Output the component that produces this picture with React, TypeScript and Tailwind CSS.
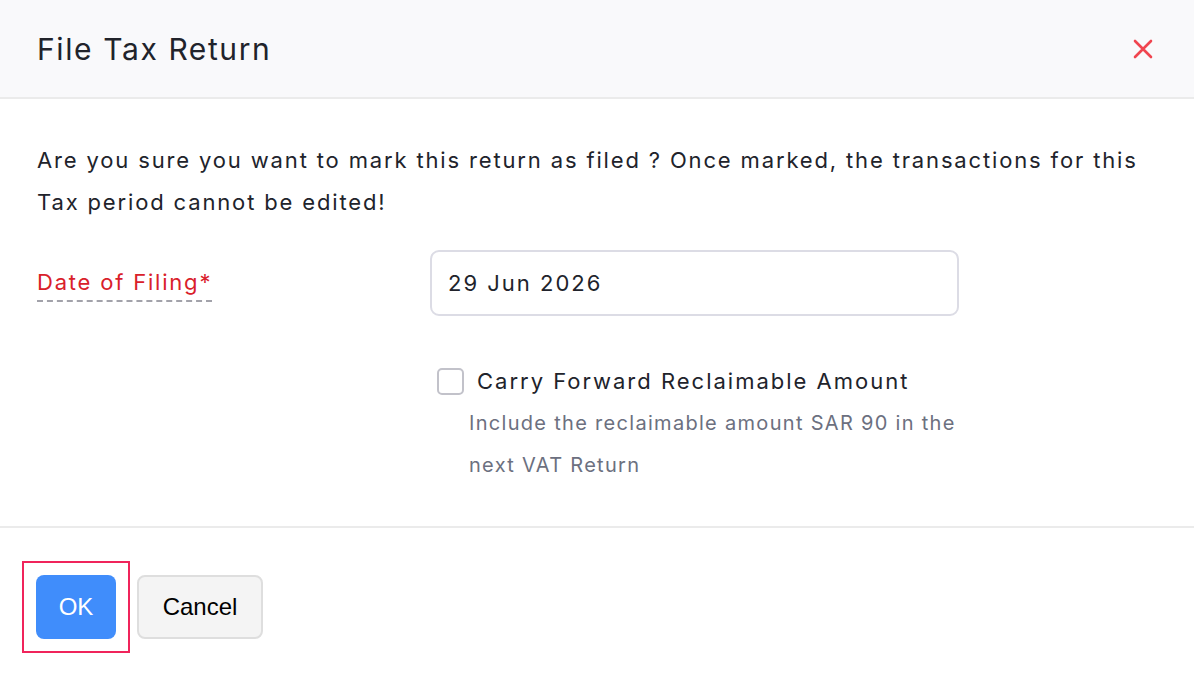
const App = () => {
  return (
    <div className="h-[682px] w-[1194px] overflow-hidden bg-white font-['Inter','Noto_Sans',sans-serif] text-[#21232b]">
      <div className="flex h-[99px] items-center justify-between border-b-2 border-[#ebebeb] bg-[#f9f9fb] pl-[37px] pr-[40px]">
        <h1 className="text-[30px] font-normal leading-none tracking-[1.6px]">File Tax Return</h1>
        <button aria-label="Close" className="flex h-[22px] w-[22px] items-center justify-center">
          <svg width="20" height="20" viewBox="0 0 20 20" fill="none" stroke="#f0454f" strokeWidth="2.6" strokeLinecap="round">
            <path d="M2 2L18 18M18 2L2 18" />
          </svg>
        </button>
      </div>

      <div className="border-b-2 border-[#ebebeb] px-[37px] pb-[40px] pt-[40px]">
        <p className="text-[22px] leading-[42px] tracking-[1.85px]">
          Are you sure you want to mark this return as filed ? Once marked, the transactions for this Tax period cannot be edited!
        </p>

        <div className="mt-[27px] flex items-center">
          <div className="w-[393px]">
            <label className="border-b-2 border-dashed border-[#a2a2aa] pb-[5px] text-[22px] leading-none tracking-[1.8px] text-[#d9202a]">
              Date of Filing*
            </label>
          </div>
          <div className="flex h-[66px] w-[529px] items-center rounded-[9px] border-2 border-[#dcdce5] pl-[16px] text-[22px] tracking-[2px]">
            29 Jun 2026
          </div>
        </div>

        <div className="ml-[400px] mt-[44px]">
          <label className="flex items-center gap-[13px] text-[22px] leading-[42px] tracking-[2px]">
            <span className="h-[27px] w-[27px] shrink-0 rounded-[5px] border-2 border-[#c2c2ca] bg-white" />
            Carry Forward Reclaimable Amount
          </label>
          <p className="ml-[32px] w-[500px] text-[20px] leading-[42px] tracking-[1.3px] text-[#6c7080]">
            Include the reclaimable amount SAR 90 in the next VAT Return
          </p>
        </div>
      </div>

      <div className="flex gap-[21px] pl-[36px] pt-[47px]">
        <div className="relative">
          <div className="pointer-events-none absolute -left-[14px] -top-[14px] h-[92px] w-[108px] border-2 border-[#f0245b]" />
          <button className="h-[64px] w-[80px] rounded-[8px] bg-[#408dfb] font-['Liberation_Sans',sans-serif] text-[24px] text-white">
            OK
          </button>
        </div>
        <button className="h-[64px] w-[126px] rounded-[8px] border-2 border-[#dedede] bg-[#f4f4f4] font-['Liberation_Sans',sans-serif] text-[24px] text-black">
          Cancel
        </button>
      </div>
    </div>
  );
};

export default App;
